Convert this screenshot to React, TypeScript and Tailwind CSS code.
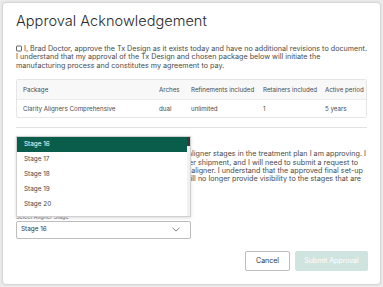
import React from "react";

const stages = ["Stage 16", "Stage 17", "Stage 18", "Stage 19", "Stage 20", "Stage 21"];

// right edges differ a little per line in the reference
const ackLines = [
  { text: "I understand that I will only receive the first 16 aligner stages in the treatment plan I am approving. I", pr: "pr-[1px]" },
  { text: "understand that I will receive up to 4 aligner stages per shipment, and I will need to submit a request to", pr: "pr-[9px]" },
  { text: "receive the next set of aligners after the last approved aligner. I understand that the approved final set-up", pr: "pr-[4px]" },
  { text: "will be the last stage I selected and the Tx Design will no longer provide visibility to the stages that are", pr: "pr-[6px]" },
];

export default function App() {
  return (
    <div
      className="h-[287px] w-[383px] overflow-hidden bg-[#ececec] pl-[2px] pt-[2px]"
      style={{ fontFamily: "Inter, 'Noto Sans', sans-serif" }}
    >
      <div className="relative h-[283px] w-[379px] rounded-[4px] border border-[#d6d6d6] bg-white px-[13px] pt-[8px] text-[#444] shadow-[0_0_3px_rgba(0,0,0,0.08)]">
        <h1 className="text-[14.6px] font-light leading-[20px] text-[#2b2b2b]">
          Approval Acknowledgement
        </h1>

        <div className="mt-[14px] text-[7.2px] leading-[8.4px] text-[#4a4a4a]">
          <span className="mr-[2px] inline-block h-[6px] w-[6px] translate-y-[0.5px] rounded-[1px] border border-[#666] align-baseline" />
          I, Brad Doctor, approve the Tx Design as it exists today and have no additional revisions to document.
          <br />
          I understand that my approval of the Tx Design and chosen package below will initiate the
          <br />
          manufacturing process and constitutes my agreement to pay.
        </div>

        <div className="mt-[9px] overflow-hidden rounded-[2px] border border-[#e6e6e6] text-[6.2px] text-[#4a4a4a]">
          <div className="grid h-[19px] grid-cols-[136px_32px_72px_62px_1fr] items-center whitespace-nowrap bg-[#f8f8f8] pl-[6px]">
            <span>Package</span>
            <span>Arches</span>
            <span>Refinements included</span>
            <span>Retainers included</span>
            <span>Active period</span>
          </div>
          <div className="grid h-[18px] grid-cols-[136px_32px_72px_62px_1fr] items-center whitespace-nowrap border-t border-[#ececec] pl-[6px]">
            <span>Clarity Aligners Comprehensive</span>
            <span>dual</span>
            <span>unlimited</span>
            <span>1</span>
            <span>5 years</span>
          </div>
        </div>

        <div className="mt-[9px] h-px bg-[#e2e2e2]" />

        <div className="relative mt-[8px]">
          <div className="pt-[14px] text-[7.2px] leading-[8.4px] text-[#4a4a4a]">
            {ackLines.map((l) => (
              <div key={l.text} className={`flex justify-end overflow-hidden ${l.pr}`}>
                <span className="whitespace-nowrap">{l.text}</span>
              </div>
            ))}
          </div>

          <div className="mt-[30px] text-[5.5px] leading-[6px] text-[#777]">Select Aligner Stage</div>
          <div className="mt-[1px] flex h-[18px] w-[175px] items-center justify-between rounded-[2px] border border-[#bdbdbd] bg-white pl-[4px] pr-[10px] text-[6.4px] text-[#333]">
            <span>Stage 16</span>
            <svg width="8" height="5" viewBox="0 0 8 5" fill="none">
              <path d="M0.5 0.8 L4 4 L7.5 0.8" stroke="#777" strokeWidth="0.9" />
            </svg>
          </div>

          {/* open stage menu */}
          <div className="absolute left-0 top-0 h-[81px] w-[175px] overflow-hidden border border-[#d0d0d0] bg-white shadow-[0_1px_3px_rgba(0,0,0,0.15)]">
            {stages.map((s, i) => (
              <div
                key={s}
                className={`flex h-[15px] items-center pl-[7px] text-[6.4px] ${
                  i === 0 ? "bg-[#0b5d4b] text-white" : "text-[#444]"
                }`}
              >
                {s}
              </div>
            ))}
            <div className="absolute right-0 top-0 h-full w-[3px] bg-[#f1f1f1]">
              <div className="h-[9px] w-[3px] bg-[#3a3a3a]" />
            </div>
          </div>
        </div>

        <div className="absolute bottom-[13px] right-[12px] flex gap-[5px] text-[7px]">
          <button className="h-[20px] w-[45px] rounded-[2px] border border-[#bdbdbd] bg-white text-[#333]">
            Cancel
          </button>
          <button className="h-[20px] w-[73px] rounded-[2px] bg-[#cfe3df] text-white">
            Submit Approval
          </button>
        </div>
      </div>
    </div>
  );
}
